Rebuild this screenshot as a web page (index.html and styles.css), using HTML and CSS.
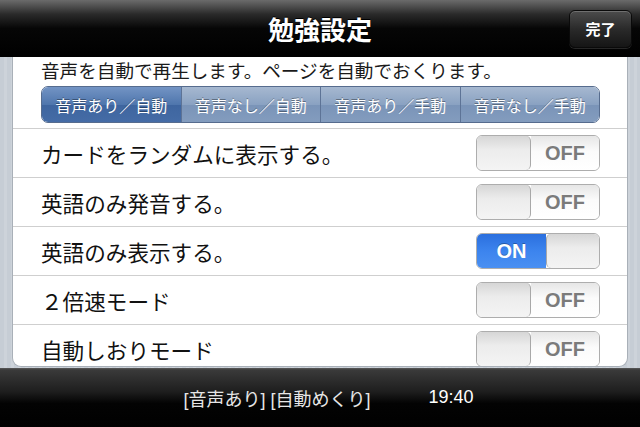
FILE: index.html
```html
<!DOCTYPE html>
<html lang="ja">
<head>
    <meta charset="UTF-8">
    <title>勉強設定</title>
    <link rel="stylesheet" href="styles.css">
</head>
<body>

<div class="screen">
    <!-- Barra superior -->
    <header class="navbar">
        <span></span>
        <h1 class="nav-title">勉強設定</h1>
        <button class="nav-done">完了</button>
    </header>

    <main class="content">
        <div class="panel">
            <div class="intro">
                <p class="intro-text">音声を自動で再生します。ページを自動でおくります。</p>
                <div class="segmented">
                    <span class="segment selected">音声あり／自動</span>
                    <span class="segment">音声なし／自動</span>
                    <span class="segment">音声あり／手動</span>
                    <span class="segment">音声なし／手動</span>
                </div>
            </div>

            <div class="row">
                <span class="row-label">カードをランダムに表示する。</span>
                <div class="switch off"><span class="knob"></span><span class="switch-text">OFF</span></div>
            </div>
            <div class="row">
                <span class="row-label">英語のみ発音する。</span>
                <div class="switch off"><span class="knob"></span><span class="switch-text">OFF</span></div>
            </div>
            <div class="row">
                <span class="row-label">英語のみ表示する。</span>
                <div class="switch on"><span class="switch-text">ON</span><span class="knob"></span></div>
            </div>
            <div class="row">
                <span class="row-label">２倍速モード</span>
                <div class="switch off"><span class="knob"></span><span class="switch-text">OFF</span></div>
            </div>
            <div class="row">
                <span class="row-label">自動しおりモード</span>
                <div class="switch off"><span class="knob"></span><span class="switch-text">OFF</span></div>
            </div>
        </div>
    </main>

    <!-- Barra inferior -->
    <footer class="statusbar">
        <span class="status-mode">[音声あり] [自動めくり]</span>
        <span class="status-time">19:40</span>
    </footer>
</div>

</body>
</html>
```

FILE: styles.css
```css
/* Geral */
body {
    margin: 0;
    font-family: "Noto Sans CJK JP", "Noto Sans", sans-serif;
    background: #000;
}

.screen {
    width: 640px;
    height: 427px;
    display: flex;
    flex-direction: column;
    overflow: hidden;
}

/* Barra superior */
.navbar {
    height: 57px;
    flex-shrink: 0;
    display: grid;
    grid-template-columns: 1fr auto 1fr;
    align-items: center;
    background: linear-gradient(#6b6b6b 0%, #2a2a2a 25%, #060606 50%, #000 100%);
}

.nav-title {
    margin: 0;
    color: #fff;
    font-size: 26px;
    font-weight: bold;
    line-height: 1;
    text-shadow: 0 -1px 0 #000;
}

.nav-done {
    justify-self: end;
    margin-right: 8px;
    width: 63px;
    height: 38px;
    border: 1px solid #0a0a0a;
    border-radius: 6px;
    background: linear-gradient(#4c4c4c, #2a2a2a 50%, #151515);
    box-shadow: inset 0 1px 0 rgba(255, 255, 255, 0.2), 0 1px 0 rgba(255, 255, 255, 0.15);
    color: #fff;
    font-family: "Noto Sans CJK JP", sans-serif;
    font-size: 15px;
    font-weight: bold;
    padding: 0;
}

/* Conteúdo */
.content {
    height: 311px;
    flex-shrink: 0;
    overflow: hidden;
    background: repeating-linear-gradient(90deg, #c6cdd5 0, #c6cdd5 4px, #cdd3da 4px, #cdd3da 7px);
}

.panel {
    margin: 0 12px;
    height: 310px;
    overflow: hidden;
    background: #fff;
    border: 1px solid #a9b0b8;
    border-top: none;
    border-radius: 0 0 9px 9px;
    box-sizing: border-box;
}

.intro {
    padding: 0 27px 5px 28px;
}

.intro-text {
    margin: 0;
    font-size: 18.6px;
    line-height: 26px;
    color: #1a1a1a;
}

.segmented {
    margin-top: 3px;
    height: 37px;
    display: flex;
    border: 1px solid #566c8e;
    border-radius: 7px;
    overflow: hidden;
    box-sizing: border-box;
}

.segment {
    flex: 1;
    display: flex;
    align-items: center;
    justify-content: center;
    font-size: 16px;
    color: #fff;
    text-shadow: 0 -1px 0 rgba(0, 0, 0, 0.35);
    background: linear-gradient(#a6b8d0, #8aa2c2 50%, #7a94b8 51%, #839cbe);
    border-left: 1px solid #5d7396;
}

.segment:first-child {
    border-left: none;
}

.segment.selected {
    background: linear-gradient(#7394c4, #4f76ad 50%, #3e659f 51%, #456ca6);
}

/* Linhas de ajuste */
.row {
    height: 48px;
    display: flex;
    align-items: center;
    justify-content: space-between;
    padding: 0 27px 0 28px;
    border-top: 1px solid #cfcfcf;
}

.row-label {
    font-size: 21.6px;
    color: #111;
}

.switch {
    width: 124px;
    height: 36px;
    display: flex;
    border: 1px solid #adadad;
    border-radius: 6px;
    overflow: hidden;
    box-sizing: border-box;
    font-family: "Liberation Sans", Arial, sans-serif;
    font-weight: bold;
    font-size: 20px;
}

.knob {
    width: 53px;
    background: linear-gradient(#d6d6d6, #ececec 40%, #f4f4f4);
    border-right: 1px solid #a8a8a8;
    border-radius: 5px;
}

.switch.off .switch-text {
    flex: 1;
    display: flex;
    align-items: center;
    justify-content: center;
    color: #7b7b7b;
    background: linear-gradient(#e6e6e6, #fbfbfb 45%, #fff);
}

.switch.on .switch-text {
    flex: 1;
    display: flex;
    align-items: center;
    justify-content: center;
    color: #fff;
    background: linear-gradient(#2b6fde, #3c84ee 50%, #4a90f2);
    text-shadow: 0 -1px 0 rgba(0, 0, 0, 0.3);
}

.switch.on .knob {
    width: 52px;
    border-right: none;
    border-left: 1px solid #a8a8a8;
}

/* Barra inferior */
.statusbar {
    flex: 1;
    display: flex;
    align-items: center;
    justify-content: center;
    gap: 58px;
    padding-left: 17px;
    background: linear-gradient(#5a5a5a 0, #3a3a3a 2px, #1e1e1e 40%, #030303 60%, #000);
    color: #e6e6e6;
    font-family: "Liberation Sans", "Noto Sans CJK JP", sans-serif;
    font-size: 18px;
}

.status-time {
    color: #fff;
}
```
